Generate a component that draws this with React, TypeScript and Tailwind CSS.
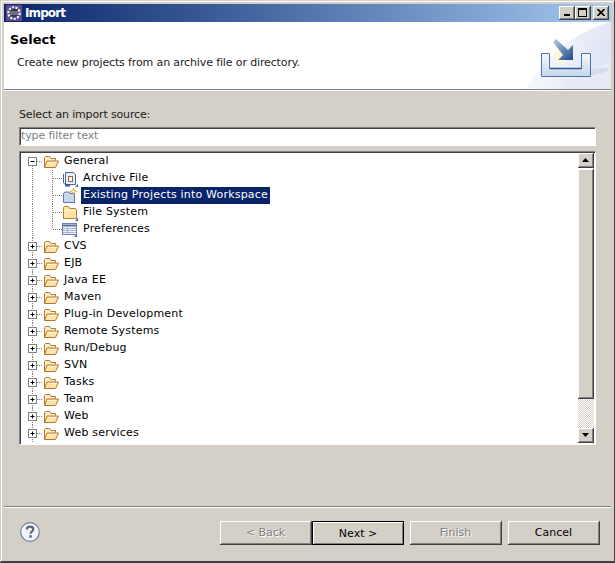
const font = "[font-family:'DejaVu_Sans',sans-serif]"

const FolderOpen = () => (
  <svg width="16" height="14" viewBox="0 0 16 14" className="flex-none">
    <path d="M1.5 12.5V2.5L2.5 1.5H6.5L8 3.5H12.5V5.5" fill="#fbeccb" stroke="#b5772a" />
    <path d="M1.5 12.5L4 6H15.5L12.5 12.5Z" fill="#fde3a8" stroke="#b9772b" strokeLinejoin="round" />
    <path d="M4.5 7.5H13.5" stroke="#fff6df" />
  </svg>
)

const FolderClosed = () => (
  <svg width="16" height="16" viewBox="0 0 16 16" className="flex-none">
    <path d="M1.5 13.5V2.5L2.5 1.5H6.5L8 3.5H13.5L14.5 4.5V13.5Z" fill="#fde3a8" stroke="#b9802f" />
    <path d="M2.5 5.5H13.5" stroke="#fff6df" />
    <path d="M13 16H16V13Z" fill="#2f62a8" />
  </svg>
)

const ArchiveIcon = () => (
  <svg width="16" height="16" viewBox="0 0 16 16" className="flex-none">
    <path d="M3.5 1.5H11.5L13.5 3.5V13.5H3.5Z" fill="#e8eefa" stroke="#46639a" />
    <path d="M1.5 3V12L3.5 13.5" fill="none" stroke="#46639a" />
    <rect x="6.5" y="5.5" width="4" height="5" fill="#fff" stroke="#8a6a30" />
    <path d="M13 16H16V13Z" fill="#2f62a8" />
    <path d="M3 14.5H8" stroke="#2f62a8" strokeWidth="2" />
  </svg>
)

const ProjectIcon = () => (
  <svg width="16" height="16" viewBox="0 0 16 16" className="flex-none">
    <path d="M1.5 14.5V5.5L3 4H7L8 5.5H12.5V14.5Z" fill="#c9d8ec" stroke="#5a78a8" />
    <path d="M11.5 0.5L12.5 2.5L14.5 3.5L12.5 4.5L11.5 6.5L10.5 4.5L8.5 3.5L10.5 2.5Z" fill="#fff2a8" stroke="#c09a2a" strokeWidth="0.8" />
  </svg>
)

const PrefsIcon = () => (
  <svg width="16" height="16" viewBox="0 0 16 16" className="flex-none">
    <rect x="0.5" y="1.5" width="14" height="11" fill="#eef2fa" stroke="#6f7fa6" />
    <path d="M1 3.5H14" stroke="#5d6f9c" strokeWidth="2" />
    <path d="M1 6.5H14M1 8.5H14M1 10.5H14M5.5 5V12" stroke="#a9b5d0" />
    <path d="M12 15H15V12Z" fill="#2f62a8" />
  </svg>
)

// one row of the tree: guide lines are drawn per row so the rows stay in flow
const TreeRow = ({
  label,
  kind,
  selected,
  lastChild,
  children,
}: {
  label: string
  kind: 'open' | 'closed' | 'child'
  selected?: boolean
  lastChild?: boolean
  children?: React.ReactNode
}) => {
  const isChild = kind === 'child'
  const width = isChild ? 40 : 21
  return (
    <div className="flex h-[17px] items-center">
      <svg width={width} height="17" viewBox={`0 0 ${width} 17`} className="flex-none">
        {/* x=0 here is page x=22 */}
        <path d={kind === 'open' ? 'M10.5 13V17' : 'M10.5 0V17'} stroke="#808080" strokeDasharray="1 1" />
        {isChild ? (
          <>
            <path d={lastChild ? 'M30.5 0V8.5' : 'M30.5 0V17'} stroke="#808080" strokeDasharray="1 1" />
            <path d="M31 8.5H40" stroke="#808080" strokeDasharray="1 1" />
          </>
        ) : (
          <>
            <path d="M15 8.5H21" stroke="#808080" strokeDasharray="1 1" />
            <rect x="6.5" y="4.5" width="8" height="8" fill="#fff" stroke="#808080" />
            <path d="M8.5 8.5H12.5" stroke="#000" />
            {kind === 'closed' && <path d="M10.5 6.5V10.5" stroke="#000" />}
          </>
        )}
      </svg>
      {isChild ? children : <FolderOpen />}
      <span
        className={[
          'ml-[3px] flex h-[17px] items-center whitespace-nowrap px-[2px] text-[11px] tracking-[0.2px]',
          selected ? 'bg-[#0a246a] text-white' : 'text-black',
        ].join(' ')}
      >
        {label}
      </span>
    </div>
  )
}

const bevel = 'shadow-[inset_1px_1px_0_#ffffff,inset_-1px_-1px_0_#808080]'

const ScrollButton = ({ up }: { up?: boolean }) => (
  <div className={`flex h-[15px] items-center justify-center border-r border-b border-[#404040] bg-[#d4d0c8] ${bevel}`}>
    <svg width="7" height="4" viewBox="0 0 7 4">
      <path d={up ? 'M3.5 0L7 4H0Z' : 'M0 0H7L3.5 4Z'} fill="#000" />
    </svg>
  </div>
)

const WizardButton = ({
  label,
  disabled,
  primary,
}: {
  label: string
  disabled?: boolean
  primary?: boolean
}) => (
  <div
    className={[
      'flex h-[24px] w-[92px] items-center justify-center bg-[#d4d0c8] pt-[2px] text-[11px]',
      primary
        ? 'border border-black shadow-[inset_1px_1px_0_#ffffff,inset_-1px_-1px_0_#808080]'
        : 'border-r border-b border-[#404040] shadow-[inset_1px_1px_0_#ffffff,inset_-1px_-1px_0_#808080]',
      disabled ? 'text-[#808080] [text-shadow:1px_1px_0_#ffffff]' : 'text-black',
    ].join(' ')}
  >
    {label}
  </div>
)

const collapsed = [
  'CVS',
  'EJB',
  'Java EE',
  'Maven',
  'Plug-in Development',
  'Remote Systems',
  'Run/Debug',
  'SVN',
  'Tasks',
  'Team',
  'Web',
  'Web services',
]

export default function App() {
  return (
    <div
      className={`${font} flex h-[563px] w-[615px] flex-col overflow-hidden border-t border-l border-r border-b-2 border-t-[#d4d0c8] border-l-[#d4d0c8] border-r-[#404040] border-b-[#404040] bg-[#d4d0c8] px-[3px] pt-[3px] pb-0 shadow-[inset_1px_1px_0_#ffffff]`}
    >
      {/* title bar */}
      <div className="flex h-[18px] flex-none items-center bg-gradient-to-r from-[#0a246a] to-[#a6caf0] pl-[2px] pr-[2px]">
        <svg width="16" height="16" viewBox="0 0 16 16" className="flex-none">
          <rect width="16" height="16" fill="#5b4a8e" />
          <circle cx="8" cy="8" r="5.6" fill="#2c2a4a" stroke="#f2f0f5" strokeWidth="2.4" strokeDasharray="2.2 1.2" />
          <circle cx="8" cy="8" r="4.2" fill="#3a3756" />
          <path d="M3.5 7H12.5M3.5 9H12.5" stroke="#d8d5e6" strokeWidth="0.7" />
        </svg>
        <span className="ml-[3px] text-[12px] font-bold tracking-[-0.9px] text-white">Import</span>
        <div className="ml-auto flex">
          <div className="flex h-[14px] w-[16px] items-end justify-center border-r border-b border-[#404040] bg-[#d4d0c8] pb-[2px] shadow-[inset_1px_1px_0_#ffffff,inset_-1px_-1px_0_#808080]">
            <div className="mb-[1px] h-[2px] w-[6px] bg-black" />
          </div>
          <div className="flex h-[14px] w-[16px] items-center justify-center border-r border-b border-[#404040] bg-[#d4d0c8] shadow-[inset_1px_1px_0_#ffffff,inset_-1px_-1px_0_#808080]">
            <div className="h-[9px] w-[9px] border border-t-2 border-black" />
          </div>
          <div className="ml-[2px] flex h-[14px] w-[16px] items-center justify-center border-r border-b border-[#404040] bg-[#d4d0c8] shadow-[inset_1px_1px_0_#ffffff,inset_-1px_-1px_0_#808080]">
            <svg width="8" height="7" viewBox="0 0 8 7">
              <path d="M0.5 0L7.5 7M7.5 0L0.5 7" stroke="#000" strokeWidth="1.6" />
            </svg>
          </div>
        </div>
      </div>

      {/* header */}
      <div className="flex h-[67px] flex-none bg-white">
        <div className="min-w-0 flex-1 pl-[6px] pt-[10px]">
          <div className="text-[13px] leading-[16px] font-bold text-black">Select</div>
          <div className="mt-[7px] pl-[7px] text-[11px] leading-[16px] tracking-[-0.13px] text-[#1c1c1c]">
            Create new projects from an archive file or directory.
          </div>
        </div>
        <svg width="90" height="67" viewBox="0 0 90 67" className="flex-none">
          <defs>
            <linearGradient id="banner" x1="0" y1="0" x2="1" y2="0.3">
              <stop offset="0" stopColor="#ffffff" />
              <stop offset="1" stopColor="#dfe5f5" />
            </linearGradient>
            <linearGradient id="tray" x1="0" y1="0" x2="0" y2="1">
              <stop offset="0" stopColor="#f4f7fb" />
              <stop offset="1" stopColor="#c8d6ea" />
            </linearGradient>
            <linearGradient id="arrow" x1="0" y1="0" x2="1" y2="1">
              <stop offset="0" stopColor="#b8cbe4" />
              <stop offset="1" stopColor="#1f4a86" />
            </linearGradient>
          </defs>
          <path d="M4 67C20 40 50 10 90 0V67Z" fill="url(#banner)" />
          <path d="M40 67C55 50 70 45 90 40V67Z" fill="#e6ebf7" />
          <ellipse cx="72" cy="50" rx="16" ry="3" fill="#ccd2e2" opacity="0.6" transform="rotate(-10 72 50)" />
          <circle cx="41" cy="33" r="8" fill="#fbf8d4" opacity="0.9" />
          <path d="M20.5 31.5H28.5V46.5H60.5V31.5H69.5V54.5H20.5Z" fill="url(#tray)" stroke="#4d74ab" />
          <path d="M28.5 46.5H60.5" stroke="#2f5a94" strokeWidth="1.4" />
          <path d="M32 20L35 17L47 28L52 23V38H37L42 33Z" fill="url(#arrow)" />
        </svg>
      </div>
      <div className="h-[2px] flex-none border-t border-[#808080] bg-white" />

      {/* body */}
      <div className="flex min-h-0 flex-1 flex-col px-[15px] pt-[16px]">
        <div className="text-[11px] leading-[16px] tracking-[-0.15px] text-[#1c1c1c]">Select an import source:</div>
        <div className="mt-[4px] flex h-[19px] w-[577px] flex-none items-center border border-t-[#808080] border-l-[#808080] border-r-white border-b-white bg-white pl-[1px] text-[11px] tracking-[-0.1px] text-[#808080] shadow-[inset_1px_1px_0_#404040]">
          type filter text
        </div>
        <div className="mt-[5px] flex h-[294px] w-[577px] flex-none border border-t-[#808080] border-l-[#808080] border-r-white border-b-white bg-white py-[1px] pl-[2px] pr-[1px] shadow-[inset_1px_1px_0_#404040]">
          <div className="min-w-0 flex-1 overflow-hidden">
            <TreeRow label="General" kind="open" />
            <TreeRow label="Archive File" kind="child">
              <ArchiveIcon />
            </TreeRow>
            <TreeRow label="Existing Projects into Workspace" kind="child" selected>
              <ProjectIcon />
            </TreeRow>
            <TreeRow label="File System" kind="child">
              <FolderClosed />
            </TreeRow>
            <TreeRow label="Preferences" kind="child" lastChild>
              <PrefsIcon />
            </TreeRow>
            {collapsed.map((label) => (
              <TreeRow key={label} label={label} kind="closed" />
            ))}
          </div>
          <div className="flex w-[16px] flex-none flex-col">
            <ScrollButton up />
            <div className={`mt-[1px] h-[230px] flex-none border-r border-b border-[#404040] bg-[#d4d0c8] ${bevel}`} />
            <div className="flex-1 bg-[repeating-conic-gradient(#ffffff_0_25%,#d4d0c8_0_50%)] bg-[length:2px_2px]" />
            <ScrollButton />
          </div>
        </div>
      </div>

      {/* footer */}
      <div className="h-[2px] flex-none border-t border-[#808080] bg-white" />
      <div className="flex h-[53px] flex-none items-start pl-[16px] pr-[11px] pt-[13px]">
        <svg width="20" height="20" viewBox="0 0 20 20" className="mt-[1px] flex-none">
          <circle cx="10" cy="10" r="9.3" fill="#f3f5fa" stroke="#6c7fa6" strokeWidth="1.2" />
          <path
            d="M6.8 7.6C6.8 5.6 8.2 4.6 10 4.6C12 4.6 13.3 5.7 13.3 7.3C13.3 9.4 10.6 9.6 10.6 11.8"
            fill="none"
            stroke="#5d6472"
            strokeWidth="2.2"
          />
          <rect x="9.3" y="13.2" width="2.5" height="2.5" fill="#5d6472" />
        </svg>
        <div className="ml-auto flex">
          <WizardButton label="< Back" disabled />
          <WizardButton label="Next >" primary />
          <div className="w-[6px]" />
          <WizardButton label="Finish" disabled />
          <div className="w-[6px]" />
          <WizardButton label="Cancel" />
        </div>
      </div>
    </div>
  )
}
